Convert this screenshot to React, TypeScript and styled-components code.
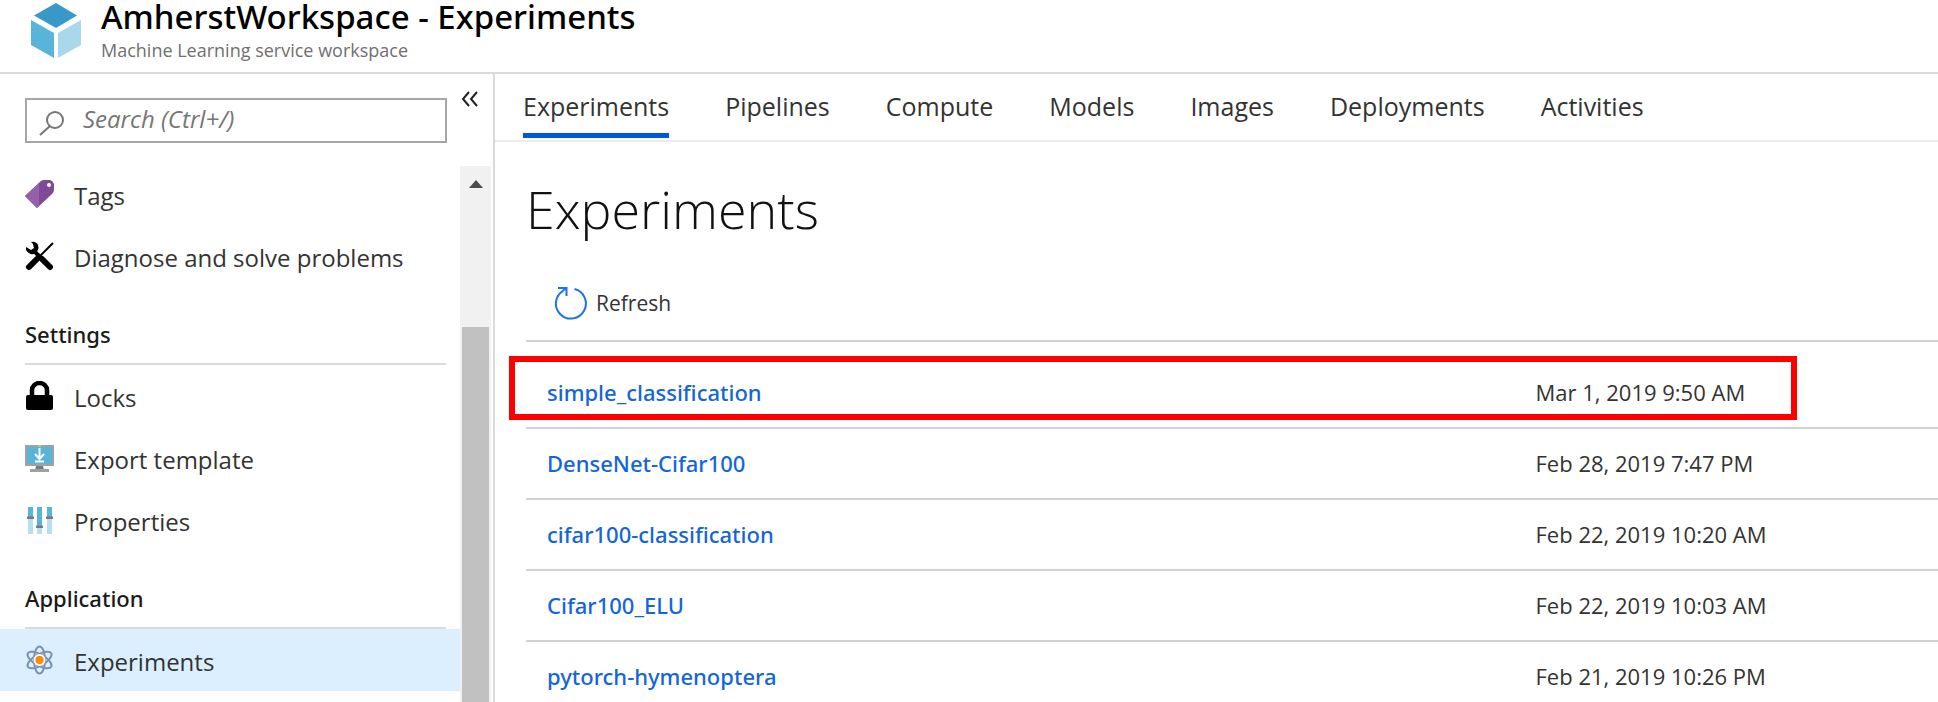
import React from "react";
import styled, { createGlobalStyle } from "styled-components";

const regular = '"Open Sans", "Noto Sans", sans-serif';
const medium = '"Noto Sans", "Open Sans", sans-serif';

const GlobalStyle = createGlobalStyle`
  *, *::before, *::after { box-sizing: border-box; }
  body { margin: 0; background: #fff; color: #333; font-family: ${regular}; }
`;

const Page = styled.div`
  display: flex;
  flex-direction: column;
  height: 100vh;
  overflow: hidden;
`;

const Header = styled.header`
  display: flex;
  flex: none;
  gap: 19px;
  height: 74px;
  padding-left: 30px;
  border-bottom: 2px solid #dadada;
`;

const CubeIcon = styled.svg`
  width: 52px;
  height: 62px;
`;

const HeaderText = styled.div`
  display: flex;
  flex-direction: column;
  gap: 4px;
`;

const WorkspaceTitle = styled.h1`
  margin: 0;
  font: 500 33px/34px ${medium};
  color: #000;
  white-space: nowrap;
`;

const WorkspaceKind = styled.p`
  margin: 0;
  font-size: 18px;
  line-height: 24px;
  color: #707070;
`;

const Body = styled.div`
  display: flex;
  flex: 1;
  min-height: 0;
`;

const Sidebar = styled.aside`
  display: flex;
  flex-direction: column;
  flex: none;
  width: 495px;
  padding-top: 16px;
  border-right: 2px solid #dadada;
`;

const SearchRow = styled.div`
  display: flex;
  align-items: flex-start;
  flex: none;
  gap: 14px;
  height: 76px;
  padding: 0 14px 0 25px;
`;

const SearchBox = styled.label`
  display: flex;
  flex: 1;
  align-items: center;
  gap: 18px;
  height: 45px;
  margin-top: 8px;
  padding-left: 12px;
  border: 2px solid #a6a6a6;
  svg { margin-top: 6px; }
`;

const SearchInput = styled.input`
  flex: 1;
  min-width: 0;
  padding: 0 0 3px;
  border: 0;
  outline: 0;
  background: transparent;
  font: italic 24px/32px ${regular};
  color: #333;
  &::placeholder { color: #767676; opacity: 1; }
`;

const CollapseButton = styled.button`
  display: flex;
  width: 18px;
  height: 18px;
  padding: 0;
  border: 0;
  background: none;
  color: #222;
`;

const MenuArea = styled.div`
  display: flex;
  flex: 1;
  min-height: 0;
`;

const Menu = styled.nav`
  flex: 1;
  margin-top: -3px;
`;

const MenuLink = styled.a<{ $active?: boolean }>`
  display: flex;
  align-items: center;
  gap: 20px;
  height: 62px;
  padding: 0 14px 0 25px;
  background: ${(p) => (p.$active ? "#dbeffe" : "transparent")};
  color: #333;
  font-size: 24px;
  line-height: 32px;
  text-decoration: none;
  white-space: nowrap;
  span { padding-top: 4px; }
  svg { flex: none; width: 29px; height: 30px; }
`;

const MenuHeading = styled.h2`
  margin: 32px 14px 0 25px;
  padding-bottom: 14px;
  border-bottom: 2px solid #dadada;
  font: 500 22px/30px ${medium};
  color: #1a1a1a;
`;

const ScrollTrack = styled.div`
  display: flex;
  flex-direction: column;
  align-items: center;
  width: 31px;
  margin-right: 2px;
  padding-top: 14px;
  background: #f1f1f1;
`;

const ScrollArrow = styled.svg`
  width: 14px;
  height: 8px;
  margin-bottom: 139px;
`;

const ScrollThumb = styled.div`
  flex: 1;
  width: 27px;
  background: #c1c1c1;
`;

const Main = styled.main`
  flex: 1;
  min-width: 0;
`;

const Tabs = styled.nav`
  display: flex;
  gap: 56px;
  height: 68px;
  padding-left: 28px;
  border-bottom: 2px solid #ececec;
`;

const Tab = styled.a<{ $active?: boolean }>`
  height: 64px;
  padding-top: 15px;
  border-bottom: 5px solid ${(p) => (p.$active ? "#0057dd" : "transparent")};
  color: #333;
  font-size: 25px;
  line-height: 34px;
  text-decoration: none;
`;

const Content = styled.section`
  padding: 32px 0 0 31px;
`;

const PageTitle = styled.h2`
  margin: 0;
  font-size: 52px;
  line-height: 70px;
  font-weight: 300;
  color: #111;
`;

const RefreshButton = styled.button`
  display: flex;
  align-items: center;
  gap: 9px;
  height: 36px;
  margin: 41px 0 19px 28px;
  padding: 0;
  border: 0;
  background: none;
  color: #333;
  font: 21px/30px ${regular};
  svg { width: 33px; height: 34px; }
`;

const ListArea = styled.div`
  position: relative;
`;

const RunTable = styled.table`
  width: 100%;
  border-collapse: separate;
  border-spacing: 0;
  table-layout: fixed;
  border-top: 2px solid #d2d2d2;
`;

const NameCell = styled.td`
  width: 71%;
  height: 71px;
  padding: 0 0 2px 21px;
  border-bottom: 2px solid #d2d2d2;
  tr:first-child > & { height: 87px; padding-top: 16px; }
`;

const DateCell = styled(NameCell)`
  width: 29%;
  padding-left: 7px;
  font-size: 22px;
  line-height: 30px;
`;

const RunLink = styled.a`
  font: 500 22px/30px ${medium};
  color: #1466d8;
  text-decoration: none;
`;

const Highlight = styled.div`
  position: absolute;
  top: 16px;
  right: 141px;
  left: -17px;
  height: 64px;
  border: 6px solid #ff0000;
  pointer-events: none;
`;

const TagIcon = () => (
  <svg viewBox="0 0 29 30">
    <path d="M0 17 16 2q1-1 3-1h6q3 1 4 4v6q0 2-2 4L12 29z" fill="#804998" />
    <path d="M0 17 14 4v23l-2 2z" fill="#9460aa" />
    <circle cx="24" cy="6" r="2" fill="#fff" />
  </svg>
);

const ToolsIcon = () => (
  <svg viewBox="0 0 29 30" fill="none" stroke="#000">
    <path d="M17 18l8 8" strokeWidth="6" strokeLinecap="round" />
    <path d="M9 10l8 8" strokeWidth="4" />
    <path d="M28 2 15 15" strokeWidth="2" />
    <path d="M14 16 4 26" strokeWidth="6" strokeLinecap="round" />
    <path d="M6 1q5-1 7 3 1 3 0 5l-4 4q-5 1-8-4V6l5 3 3-2-1-4z" fill="#000" stroke="none" />
  </svg>
);

const LockIcon = () => (
  <svg viewBox="0 0 29 30">
    <path d="M7 16V9a7.500 7 0 0 1 15 0v7" fill="none" stroke="#000" strokeWidth="4.500" />
    <rect x="1" y="14" width="27" height="15" rx="2" fill="#000" />
  </svg>
);

const ExportIcon = () => (
  <svg viewBox="0 0 29 30">
    <rect x="1" y="3" width="27" height="19" fill="#59b4d9" stroke="#a0a1a2" strokeWidth="2" />
    <path d="M11 23h7l1 4h-9z" fill="#7a7a7a" />
    <path d="M5 26h19v3H5z" fill="#a0a1a2" />
    <path d="M14.500 5v10M10 11l4.500 5 4.500-5M10 18.500h9" fill="none" stroke="#fff" strokeWidth="2" />
    <path d="M13 2h3v2h-3z" fill="#b8d432" />
  </svg>
);

const SlidersIcon = () => (
  <svg viewBox="0 0 29 30">
    <path d="M3 2h5v10H3zM12 2h5v19h-5zM22 2h5v10h-5z" fill="#59b4d9" />
    <path d="M3 13h5v16H3zM12 22h5v7h-5zM22 13h5v16h-5z" fill="#b8dff0" />
    <path d="M2 11.500h7v2.500H2zM11 20.500h7V23h-7zM21 11.500h7v2.500h-7z" fill="#7a7a7a" />
  </svg>
);

const AtomIcon = () => (
  <svg viewBox="0 0 29 30" fill="none" stroke="#7a93b0" strokeWidth="2">
    {[0, 60, 120].map((angle) => (
      <ellipse key={angle} cx="14.500" cy="15" rx="5.500" ry="13.500" transform={`rotate(${angle} 14.500 15)`} />
    ))}
    <circle cx="14.500" cy="15" r="6" fill="#fff" stroke="none" />
    <circle cx="14.500" cy="15" r="4.200" fill="#ff8c00" stroke="none" />
  </svg>
);

const TABS = ["Experiments", "Pipelines", "Compute", "Models", "Images", "Deployments", "Activities"];

const RUNS = [
  ["simple_classification", "Mar 1, 2019 9:50 AM"],
  ["DenseNet-Cifar100", "Feb 28, 2019 7:47 PM"],
  ["cifar100-classification", "Feb 22, 2019 10:20 AM"],
  ["Cifar100_ELU", "Feb 22, 2019 10:03 AM"],
  ["pytorch-hymenoptera", "Feb 21, 2019 10:26 PM"],
];

export default function App() {
  return (
    <Page>
      <GlobalStyle />
      <Header>
        <CubeIcon viewBox="0 0 52 62" aria-hidden="true">
          <path d="M26 3 47 15.500 26 28 4 15.500z" fill="#3999c6" />
          <path d="M1 20 24 33v25L1 45z" fill="#59b4d9" />
          <path d="M51 20 28 33v25l23-13z" fill="#a9d8ec" />
        </CubeIcon>
        <HeaderText>
          <WorkspaceTitle>AmherstWorkspace - Experiments</WorkspaceTitle>
          <WorkspaceKind>Machine Learning service workspace</WorkspaceKind>
        </HeaderText>
      </Header>
      <Body>
        <Sidebar>
          <SearchRow>
            <SearchBox>
              <svg width="26" height="26" viewBox="0 0 26 26" fill="none" stroke="#767676" strokeWidth="2" aria-hidden="true">
                <circle cx="16" cy="9" r="8" />
                <path d="M11 15 1 24" />
              </svg>
              <SearchInput type="search" aria-label="Search" placeholder="Search (Ctrl+/)" />
            </SearchBox>
            <CollapseButton type="button" aria-label="Collapse menu">
              <svg width="18" height="18" viewBox="0 0 18 18" fill="none" stroke="currentColor" strokeWidth="2">
                <path d="M8 2 2 9l6 7M16 2l-6 7 6 7" />
              </svg>
            </CollapseButton>
          </SearchRow>
          <MenuArea>
            <Menu>
              <MenuLink href="#tags"><TagIcon /><span>Tags</span></MenuLink>
              <MenuLink href="#diagnose"><ToolsIcon /><span>Diagnose and solve problems</span></MenuLink>
              <MenuHeading>Settings</MenuHeading>
              <MenuLink href="#locks"><LockIcon /><span>Locks</span></MenuLink>
              <MenuLink href="#export"><ExportIcon /><span>Export template</span></MenuLink>
              <MenuLink href="#properties"><SlidersIcon /><span>Properties</span></MenuLink>
              <MenuHeading>Application</MenuHeading>
              <MenuLink href="#experiments" $active><AtomIcon /><span>Experiments</span></MenuLink>
            </Menu>
            <ScrollTrack>
              <ScrollArrow viewBox="0 0 14 8"><path d="M7 0l7 8H0z" fill="#4a4a4a" /></ScrollArrow>
              <ScrollThumb />
            </ScrollTrack>
          </MenuArea>
        </Sidebar>
        <Main>
          <Tabs>
            {TABS.map((name, i) => (
              <Tab key={name} href={`#${name.toLowerCase()}`} $active={i === 0}>{name}</Tab>
            ))}
          </Tabs>
          <Content>
            <PageTitle>Experiments</PageTitle>
            <RefreshButton type="button">
              <svg viewBox="0 0 33 34" fill="none" stroke="#1a73e8" strokeWidth="2" aria-hidden="true">
                <path d="M20.500 3A15 15 0 1 1 9 4.800L12.500 2" />
                <path d="M4 2h8.500v8" />
              </svg>
              Refresh
            </RefreshButton>
            <ListArea>
              <RunTable>
                <tbody>
                  {RUNS.map(([name, date]) => (
                    <tr key={name}>
                      <NameCell><RunLink href={`#${name}`}>{name}</RunLink></NameCell>
                      <DateCell>{date}</DateCell>
                    </tr>
                  ))}
                </tbody>
              </RunTable>
              <Highlight />
            </ListArea>
          </Content>
        </Main>
      </Body>
    </Page>
  );
}
